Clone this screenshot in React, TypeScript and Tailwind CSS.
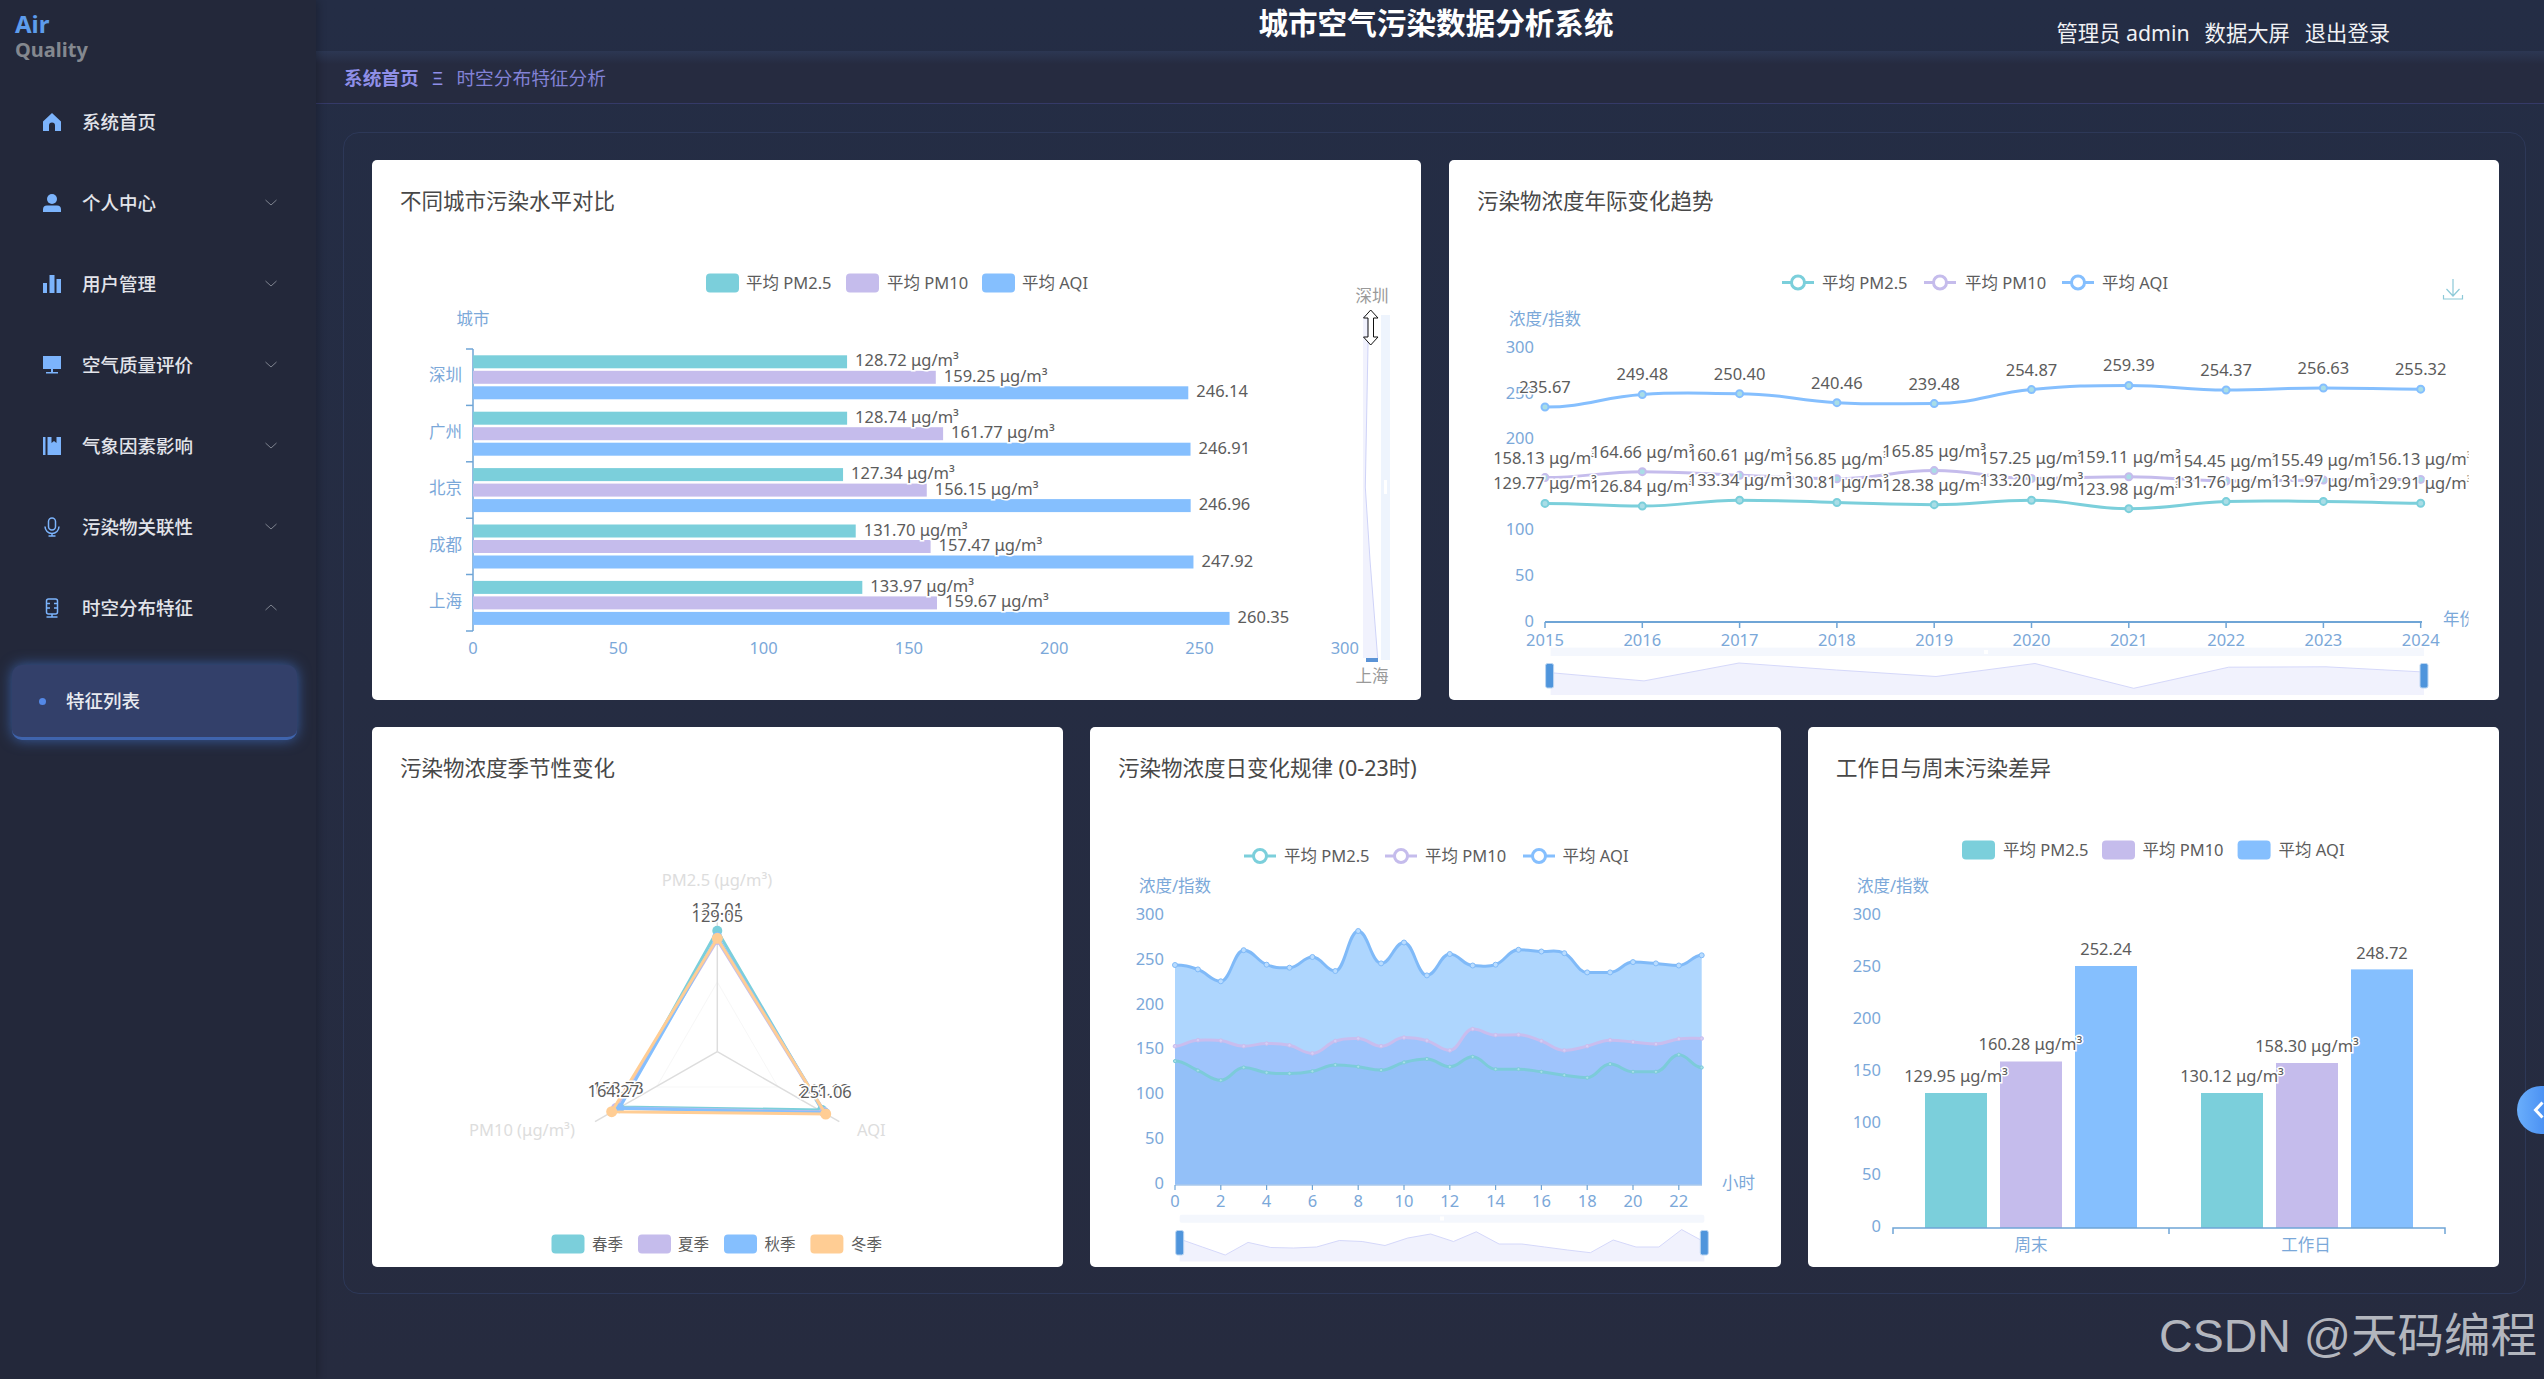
import React from "react";

const TEAL = "#7bcfdb";
const LAVENDER = "#c5bcec";
const BLUE = "#85bffe";
const ORANGE = "#ffcd94";
const TICK = "#7ba8d9";
const AXIS = "#6fa5d6";
const UNIT = " μg/m³";

type Pt = [number, number];

// monotone bezier, close enough to how echarts smooths its lines
const smooth = (pts: Pt[]) => {
  const slope = (i: number) => {
    if (i === 0 || i === pts.length - 1) return 0;
    const a = pts[i][1] - pts[i - 1][1];
    const b = pts[i + 1][1] - pts[i][1];
    if (a * b <= 0) return 0;
    return (pts[i + 1][1] - pts[i - 1][1]) / (pts[i + 1][0] - pts[i - 1][0]);
  };
  let d = `M${pts[0][0]} ${pts[0][1]}`;
  for (let i = 0; i < pts.length - 1; i++) {
    const dx = (pts[i + 1][0] - pts[i][0]) * 0.42;
    d += `C${pts[i][0] + dx} ${pts[i][1] + slope(i) * dx} ${pts[i + 1][0] - dx} ${pts[i + 1][1] - slope(i + 1) * dx} ${pts[i + 1][0]} ${pts[i + 1][1]}`;
  }
  return d;
};

const area = (pts: Pt[], base: number) =>
  `${smooth(pts)}L${pts[pts.length - 1][0]} ${base}L${pts[0][0]} ${base}Z`;

const Txt: React.FC<{
  x: number;
  y: number;
  fill?: string;
  anchor?: "start" | "middle" | "end";
  size?: number;
  outline?: boolean;
  children: React.ReactNode;
}> = ({ x, y, fill = "#5c5c5c", anchor = "start", size = 16.5, outline, children }) => (
  <text
    x={x}
    y={y - 1.5}
    fill={fill}
    fontSize={size}
    textAnchor={anchor}
    dominantBaseline="central"
    stroke={outline ? "#fff" : undefined}
    strokeWidth={outline ? 3 : undefined}
    paintOrder="stroke"
  >
    {children}
  </text>
);

const RectLegend: React.FC<{ y: number; items: [number, number, string, string][]; size?: number }> = ({ y, items, size }) => (
  <>
    {items.map(([x, tx, color, label]) => (
      <g key={label}>
        <rect x={x} y={y - 10.5} width={33} height={19} rx={4} fill={color} />
        <Txt x={tx} y={y} size={size}>{label}</Txt>
      </g>
    ))}
  </>
);

const LineLegend: React.FC<{ y: number; items: [number, number, string, string][] }> = ({ y, items }) => (
  <>
    {items.map(([x, tx, color, label]) => (
      <g key={label}>
        <line x1={x} x2={x + 32} y1={y - 1} y2={y - 1} stroke={color} strokeWidth={3} />
        <circle cx={x + 16} cy={y - 1} r={6.5} fill="#fff" stroke={color} strokeWidth={3} />
        <Txt x={tx} y={y}>{label}</Txt>
      </g>
    ))}
  </>
);

const Handle: React.FC<{ x: number; y: number; h: number }> = ({ x, y, h }) => (
  <rect x={x} y={y} width={8} height={h} rx={2} fill="#4f95dc" stroke="#bcd6f2" strokeWidth={1} />
);

const cities: [string, number[]][] = [
  ["深圳", [128.72, 159.25, 246.14]],
  ["广州", [128.74, 161.77, 246.91]],
  ["北京", [127.34, 156.15, 246.96]],
  ["成都", [131.7, 157.47, 247.92]],
  ["上海", [133.97, 159.67, 260.35]],
];

const CityChart = () => (
  <svg viewBox="372 242 1049 458" className="block w-full h-[458px]">
    <RectLegend
      y={284}
      items={[
        [706, 746, TEAL, "平均 PM2.5"],
        [846, 887, LAVENDER, "平均 PM10"],
        [982, 1022, BLUE, "平均 AQI"],
      ]}
    />
    <Txt x={473} y={319.5} fill={TICK} anchor="middle">城市</Txt>
    <line x1={473} x2={473} y1={349} y2={631} stroke={AXIS} strokeWidth={1.5} />
    {[349, 405.4, 461.8, 518.2, 574.6, 631].map((y) => (
      <line key={y} x1={466} x2={473} y1={y} y2={y} stroke={AXIS} strokeWidth={1.5} />
    ))}
    {[0, 50, 100, 150, 200, 250, 300].map((v) => (
      <Txt key={v} x={473 + v * 2.906} y={649} fill={TICK} anchor="middle">{v}</Txt>
    ))}
    {cities.map(([name, vals], i) => {
      const top = 355.3 + i * 56.4;
      return (
        <g key={name}>
          <Txt x={462} y={top + 21} fill={TICK} anchor="end">{name}</Txt>
          {vals.map((v, j) => (
            <rect key={j} x={473} y={top + j * 15.5} width={v * 2.906} height={13} fill={[TEAL, LAVENDER, BLUE][j]} />
          ))}
          {vals.map((v, j) => (
            <Txt key={j} x={473 + v * 2.906 + 8} y={top + j * 15.5 + 6} outline>
              {v.toFixed(2)}{j < 2 ? UNIT : ""}
            </Txt>
          ))}
        </g>
      );
    })}
    {/* vertical dataZoom */}
    <Txt x={1372} y={297} fill="#999" anchor="middle">深圳</Txt>
    <Txt x={1372} y={677} fill="#999" anchor="middle">上海</Txt>
    <rect x={1381} y={315} width={9} height={345} fill="#eef4fd" />
    <rect x={1384} y={480} width={3} height={14} fill="#fff" />
    <polygon points="1363,315 1368,315 1368,345 1365.3,487 1370,560 1377.7,658 1363,658" fill="#f1f2fd" />
    <polyline points="1368,315 1368,345 1365.3,487 1370,560 1377.7,658" fill="none" stroke="#cfd3f8" strokeWidth={1} />
    <rect x={1366} y={658} width={12} height={4} fill="#5b93d6" />
    <polygon
      points="1370.7,310 1378,318 1373.5,318 1373.5,337 1378,337 1370.7,345 1363.5,337 1368,337 1368,318 1363.5,318"
      fill="#fff"
      stroke="#111"
      strokeWidth={1}
    />
  </svg>
);

const yearX = (i: number) => 1545 + i * 97.3;
const yearY = (v: number) => 621.5 - v * 0.91;
const yearly = [
  { color: TEAL, unit: true, vals: [129.77, 126.84, 133.34, 130.81, 128.38, 133.2, 123.98, 131.76, 131.97, 129.91] },
  { color: LAVENDER, unit: true, vals: [158.13, 164.66, 160.61, 156.85, 165.85, 157.25, 159.11, 154.45, 155.49, 156.13] },
  { color: BLUE, unit: false, vals: [235.67, 249.48, 250.4, 240.46, 239.48, 254.87, 259.39, 254.37, 256.63, 255.32] },
];

const YearChart = () => (
  <svg viewBox="1449 242 1050 458" className="block w-full h-[458px]">
    <defs>
      <clipPath id="yearClip">
        <rect x={1449} y={242} width={1019.5} height={458} />
      </clipPath>
    </defs>
    <LineLegend
      y={283.5}
      items={[
        [1782, 1822, TEAL, "平均 PM2.5"],
        [1924, 1965, LAVENDER, "平均 PM10"],
        [2062, 2102, BLUE, "平均 AQI"],
      ]}
    />
    <path d="M2453 279v17M2446.500 289l6.500 7 6.500-7M2443.500 295v4h19v-4" fill="none" stroke="#8cc9d8" strokeWidth={1.2} />
    <Txt x={1545} y={319.5} fill={TICK} anchor="middle">浓度/指数</Txt>
    {[0, 50, 100, 200, 250, 300].map((v) => (
      <Txt key={v} x={1534} y={621.5 - (v / 50) * 45.6} fill={TICK} anchor="end">{v}</Txt>
    ))}
    <line x1={1545} x2={2422} y1={622} y2={622} stroke={AXIS} strokeWidth={2} />
    {yearly[0].vals.map((_, i) => (
      <g key={i}>
        <line x1={yearX(i)} x2={yearX(i)} y1={622} y2={628} stroke={AXIS} strokeWidth={1.5} />
        <Txt x={yearX(i)} y={640.5} fill={TICK} anchor="middle">{2015 + i}</Txt>
      </g>
    ))}
    <g clipPath="url(#yearClip)">
      <Txt x={2443} y={620} fill={TICK}>年份</Txt>
      {yearly.map((s) => (
        <g key={s.color}>
          <path d={smooth(s.vals.map((v, i): Pt => [yearX(i), yearY(v)]))} fill="none" stroke={s.color} strokeWidth={3} />
          {s.vals.map((v, i) => (
            <circle key={i} cx={yearX(i)} cy={yearY(v)} r={3.5} fill="#a9dde6" stroke={s.color} strokeWidth={2} />
          ))}
        </g>
      ))}
      {yearly.map((s) =>
        s.vals.map((v, i) => (
          <Txt key={s.color + i} x={yearX(i)} y={yearY(v) - 19} anchor="middle" outline>
            {v.toFixed(2)}{s.unit ? UNIT : ""}
          </Txt>
        ))
      )}
    </g>
    {/* dataZoom */}
    <rect x={1550.6} y={647.6} width={873.4} height={8.4} fill="#f4f7fd" />
    <rect x={1984} y={650} width={4} height={4} fill="#fff" />
    <polygon
      points="1550.6,695 1550.6,672.7 1644,680.9 1739,663 1836.5,670 1936,676.5 2035,663.5 2133.7,688.3 2228.7,667.2 2326,666.8 2424,672 2424,695"
      fill="#f1f2fd"
    />
    <polyline
      points="1550.6,672.7 1644,680.9 1739,663 1836.5,670 1936,676.5 2035,663.5 2133.7,688.3 2228.7,667.2 2326,666.8 2424,672"
      fill="none"
      stroke="#d5d8fa"
      strokeWidth={1}
    />
    <Handle x={1545.6} y={663.5} h={24.5} />
    <Handle x={2420} y={663.5} h={24.5} />
  </svg>
);

const seasons: { color: string; pts: Pt[] }[] = [
  { color: TEAL, pts: [[717.3, 930.7], [619, 1107], [822, 1110]] },
  { color: LAVENDER, pts: [[717.3, 940], [616, 1108], [824, 1112]] },
  { color: BLUE, pts: [[717.3, 937], [619.3, 1108.3], [825, 1112.7]] },
  { color: ORANGE, pts: [[717.3, 938.3], [611.7, 1111.7], [825.7, 1114]] },
];

const SeasonChart = () => (
  <svg viewBox="372 809 691 458" className="block w-full h-[458px]">
    <Txt x={717} y={880.5} fill="#ddd" anchor="middle">PM2.5 (μg/m³)</Txt>
    <Txt x={469} y={1131} fill="#ddd">PM10 (μg/m³)</Txt>
    <Txt x={857} y={1131} fill="#ddd">AQI</Txt>
    <polygon points="717.3,982 656.5,1087 778,1087" fill="none" stroke="#f7f7f7" />
    <line x1={717.3} x2={717.3} y1={1051.7} y2={912} stroke="#ddd" strokeWidth={1.5} />
    <line x1={717.3} x2={595} y1={1051.7} y2={1121.7} stroke="#ddd" strokeWidth={1.5} />
    <line x1={717.3} x2={839.3} y1={1051.7} y2={1121.7} stroke="#ddd" strokeWidth={1.5} />
    {seasons.map((s) => (
      <g key={s.color}>
        <polygon points={s.pts.map((p) => p.join(",")).join(" ")} fill="none" stroke={s.color} strokeWidth={3} />
        {s.pts.map((p, i) => (
          <circle key={i} cx={p[0]} cy={p[1]} r={s.color === ORANGE ? 5.5 : 5} fill={s.color} />
        ))}
      </g>
    ))}
    <Txt x={717.3} y={909.5} anchor="middle" outline>137.01</Txt>
    <Txt x={717.3} y={917} anchor="middle" outline>129.05</Txt>
    <Txt x={618} y={1089} anchor="middle" outline>158.73</Txt>
    <Txt x={613.3} y={1091.7} anchor="middle" outline>164.27</Txt>
    <Txt x={824} y={1091} anchor="middle" outline>248.12</Txt>
    <Txt x={826} y={1093.3} anchor="middle" outline>251.06</Txt>
    <RectLegend
      size={15.5}
      y={1245}
      items={[
        [551.5, 592, TEAL, "春季"],
        [638, 678, LAVENDER, "夏季"],
        [724, 764.5, BLUE, "秋季"],
        [810.4, 851, ORANGE, "冬季"],
      ]}
    />
  </svg>
);

const hourX = (i: number) => 1175 + i * 22.9;
const aqiY = [965, 969.4, 981.3, 950.2, 964.7, 967.7, 957, 971, 931, 963.4, 942.5, 975.4, 954, 965.5, 964.7, 949.8, 951.5, 953.2, 972.4, 972.4, 962.1, 963.4, 965.5, 955.3];
const pm10Y = [1046.2, 1040.2, 1040.6, 1046.2, 1043.6, 1045.3, 1053.4, 1041, 1038.5, 1046.2, 1037.6, 1040.6, 1050.4, 1029.1, 1035.1, 1034.7, 1041, 1050.4, 1046.2, 1040.2, 1041.9, 1044, 1038.9, 1038.5];
const pm25Y = [1061.1, 1070.5, 1080.3, 1067.5, 1072.6, 1073.5, 1071.3, 1064.9, 1066.7, 1070.1, 1062.4, 1059, 1066.7, 1056.8, 1069.2, 1069.2, 1071.8, 1075.2, 1077.7, 1064.1, 1071.8, 1071.8, 1054.7, 1067.5];
const zoomY = [1239, 1247, 1255, 1242.4, 1247.5, 1248, 1247, 1240.5, 1241.5, 1245.5, 1238, 1234, 1241.5, 1231.8, 1244, 1244, 1247, 1250, 1252.7, 1240, 1247, 1247, 1229.6, 1242];

const hourlySeries = [
  { ys: aqiY, fill: "#aed6fe", line: "#80baf8", dot: "#b9dcff", r: 2.5 },
  { ys: pm10Y, fill: "#9fc4fc", line: "#c9bdee", dot: "#d6cef4", r: 1.8 },
  { ys: pm25Y, fill: "#93c0f8", line: "#7ccbd9", dot: "#a9e0e8", r: 1.6 },
];

const HourChart = () => {
  const zoomPts = zoomY.map((y, i) => `${1179.6 + i * 22.82},${y}`).join(" ");
  return (
    <svg viewBox="1090 809 691 458" className="block w-full h-[458px]">
      <LineLegend
        y={857}
        items={[
          [1244, 1284, TEAL, "平均 PM2.5"],
          [1385, 1425, LAVENDER, "平均 PM10"],
          [1523, 1562.5, BLUE, "平均 AQI"],
        ]}
      />
      <Txt x={1175} y={887} fill={TICK} anchor="middle">浓度/指数</Txt>
      {[0, 50, 100, 150, 200, 250, 300].map((v) => (
        <Txt key={v} x={1164} y={1183.5 - (v / 50) * 44.7} fill={TICK} anchor="end">{v}</Txt>
      ))}
      {hourlySeries.map((s) => (
        <path key={s.fill} d={area(s.ys.map((y, i): Pt => [hourX(i), y]), 1185)} fill={s.fill} />
      ))}
      {hourlySeries.map((s) => (
        <g key={s.line}>
          <path d={smooth(s.ys.map((y, i): Pt => [hourX(i), y]))} fill="none" stroke={s.line} strokeWidth={3} />
          {s.ys.map((y, i) => (
            <circle key={i} cx={hourX(i)} cy={y} r={s.r} fill={s.dot} stroke={s.line} strokeWidth={1} />
          ))}
        </g>
      ))}
      <line x1={1175} x2={1702} y1={1185} y2={1185} stroke="#a9c9ec" strokeWidth={1.5} />
      {Array.from({ length: 12 }, (_, i) => i * 2).map((h) => (
        <g key={h}>
          <line x1={hourX(h)} x2={hourX(h)} y1={1185} y2={1190} stroke={AXIS} strokeWidth={1.2} />
          <Txt x={hourX(h)} y={1202} fill={TICK} anchor="middle">{h}</Txt>
        </g>
      ))}
      <Txt x={1722} y={1183.5} fill={TICK}>小时</Txt>
      <rect x={1179.6} y={1214.7} width={524.8} height={8.1} rx={2} fill="#f4f7fd" />
      <rect x={1440} y={1216.5} width={4} height={4} fill="#fff" />
      <polygon points={`1179.6,1261.6 ${zoomPts} 1704.4,1261.6`} fill="#f1f2fd" />
      <polyline points={zoomPts} fill="none" stroke="#d5d8fa" strokeWidth={1} />
      <Handle x={1175.7} y={1230.5} h={24.5} />
      <Handle x={1700.3} y={1230.5} h={24.5} />
    </svg>
  );
};

const weekBars: [number, number, string, string, number, number][] = [
  [1925, 1093, TEAL, "129.95" + UNIT, 1956, 1077],
  [2000, 1061.5, LAVENDER, "160.28" + UNIT, 2030.4, 1045],
  [2075, 966, BLUE, "252.24", 2106, 950],
  [2201, 1093, TEAL, "130.12" + UNIT, 2232, 1077],
  [2276, 1063, LAVENDER, "158.30" + UNIT, 2307, 1047],
  [2351, 969.4, BLUE, "248.72", 2382, 953.6],
];

const WeekChart = () => (
  <svg viewBox="1808 809 691 458" className="block w-full h-[458px]">
    <RectLegend
      y={851}
      items={[
        [1962, 2003, TEAL, "平均 PM2.5"],
        [2102, 2142.4, LAVENDER, "平均 PM10"],
        [2237.6, 2278.5, BLUE, "平均 AQI"],
      ]}
    />
    <Txt x={1893} y={887} fill={TICK} anchor="middle">浓度/指数</Txt>
    {[0, 50, 100, 150, 200, 250, 300].map((v) => (
      <Txt key={v} x={1881} y={1227 - (v / 50) * 52} fill={TICK} anchor="end">{v}</Txt>
    ))}
    {weekBars.map(([x, top, color]) => (
      <rect key={x} x={x} y={top} width={62} height={1228 - top} fill={color} />
    ))}
    <path d="M1893 1234v-6H2445v6M2169 1228v6" fill="none" stroke={AXIS} strokeWidth={1.5} />
    {weekBars.map(([, , , label, cx, cy]) => (
      <Txt key={label} x={cx} y={cy} anchor="middle" outline>{label}</Txt>
    ))}
    <Txt x={2031} y={1246} fill={TICK} anchor="middle">周末</Txt>
    <Txt x={2306} y={1246} fill={TICK} anchor="middle">工作日</Txt>
  </svg>
);

const Card: React.FC<{ title: string; children: React.ReactNode }> = ({ title, children }) => (
  <div className="bg-white rounded-[5px] h-[540px] flex flex-col overflow-hidden">
    <div className="h-[82px] shrink-0 pl-[28px] flex items-center text-[21.5px] text-[#484848]">{title}</div>
    {children}
  </div>
);

const icons: Record<string, React.ReactNode> = {
  home: <path d="M10 1 19 9.500V19h-6v-5.500a3 3 0 0 0-6 0V19H1V9.500Z" fill="currentColor" />,
  user: (
    <>
      <circle cx="10" cy="6" r="5" fill="currentColor" />
      <path d="M1 19v-2.500a4 4 0 0 1 4-4h10a4 4 0 0 1 4 4V19Z" fill="currentColor" />
    </>
  ),
  bars: <path d="M1 9h4v10H1ZM7.500 1h5v18h-5ZM14.500 5h4.500v14h-4.500Z" fill="currentColor" />,
  monitor: <path d="M1 1h18v13H1ZM9 14h2v3h5v1.500H4V17h5Z" fill="currentColor" />,
  book: <path d="M1 1h2.500v18H1ZM5.500 1h4v6l2.500-2 2.500 2V1H19v18H5.500Z" fill="currentColor" />,
  mic: (
    <g fill="none" stroke="currentColor" strokeWidth="1.500">
      <rect x="6.500" y="1" width="7" height="12" rx="3.500" />
      <path d="M3 9.500a7 7 0 0 0 14 0M10 16.500V19M6.500 19h7" />
    </g>
  ),
  server: (
    <g fill="none" stroke="currentColor" strokeWidth="1.500">
      <rect x="4.500" y="1" width="11" height="15" rx="2" />
      <path d="M4.500 5.500H8M12 5.500h3.500M4.500 10H8M12 10h3.500M10 16v3M4.500 19h11" />
    </g>
  ),
};

const menu: [string, string, "none" | "down" | "up"][] = [
  ["home", "系统首页", "none"],
  ["user", "个人中心", "down"],
  ["bars", "用户管理", "down"],
  ["monitor", "空气质量评价", "down"],
  ["book", "气象因素影响", "down"],
  ["mic", "污染物关联性", "down"],
  ["server", "时空分布特征", "up"],
];

const Sidebar = () => (
  <aside className="w-[316px] shrink-0 bg-[#23283a] shadow-[2px_0_8px_rgba(0,0,0,0.25)] z-10">
    <div className="h-[81px] pl-[15px] pt-[11px] font-bold">
      <div className="text-[24px] leading-[26px] text-[#5d9cec]">Air</div>
      <div className="text-[20px] leading-[26px] text-[#84888f]">Quality</div>
    </div>
    {menu.map(([icon, label, arrow]) => (
      <div key={label} className="h-[81px] pl-[42px] pr-[39px] flex items-center text-[#e2e4ea]">
        <svg viewBox="0 0 20 20" className="w-[20px] h-[20px] text-[#7cb4fc]">{icons[icon]}</svg>
        <span className="ml-[20px] flex-1 text-[18.5px] font-medium">{label}</span>
        {arrow !== "none" && (
          <svg viewBox="0 0 12 7" className="w-[12px] h-[7px] text-[#7f8490]">
            <path d={arrow === "down" ? "M0.500 1 6 6l5.500-5" : "M0.500 6 6 1l5.500 5"} fill="none" stroke="currentColor" strokeWidth="1" />
          </svg>
        )}
      </div>
    ))}
    <div className="mt-[17px] ml-[12px] w-[285px] h-[75px] rounded-[10px] bg-[#33406a] border-b-[3px] border-[#3f64ad] shadow-[0_0_14px_#3a5fa3] pl-[27px] flex items-center text-[#e8eaf0]">
      <span className="w-[7px] h-[7px] rounded-full bg-[#5488e6]" />
      <span className="ml-[20px] text-[18.5px] font-medium">特征列表</span>
    </div>
  </aside>
);

export default function App() {
  return (
    <div className="relative flex w-[2544px] h-[1379px] overflow-hidden bg-[#262b40] font-['Noto_Sans','Noto_Sans_CJK_SC',sans-serif]">
      <Sidebar />
      <main className="flex-1 flex flex-col bg-linear-to-b from-[#242d45] to-[#262b3f]">
        <header className="h-[51px] shrink-0 pl-[12px] grid grid-cols-[1fr_auto_1fr] text-white">
          <div />
          <h1 className="mt-[4px] text-[29.600px] leading-[38px] font-bold">城市空气污染数据分析系统</h1>
          <div className="mt-[18px] pr-[154px] flex justify-end gap-[15px] text-[21.300px] leading-[30px] text-[#f0f1f4]">
            <span>管理员 admin</span>
            <span>数据大屏</span>
            <span>退出登录</span>
          </div>
        </header>
        <div className="h-[53px] shrink-0 pl-[28px] pt-[2px] flex items-center gap-[13px] text-[18.700px] border-b border-[#353a68] bg-linear-to-b from-[#2c3753] to-[#262b40] to-[25%]">
          <span className="font-bold text-[#8f8fe8]">系统首页</span>
          <span className="text-[#8f8fe8]">Ξ</span>
          <span className="text-[#8282d6]">时空分布特征分析</span>
        </div>
        <div className="mt-[28px] ml-[27px] mr-[18px] h-[1162px] border border-[#2d3858] rounded-[16px] pl-[28px] pr-[26px] pt-[27px] pb-[26px] flex flex-col gap-[27px]">
          <div className="grid grid-cols-[1049px_1fr] gap-[28px]">
            <Card title="不同城市污染水平对比"><CityChart /></Card>
            <Card title="污染物浓度年际变化趋势"><YearChart /></Card>
          </div>
          <div className="grid grid-cols-3 gap-[27px]">
            <Card title="污染物浓度季节性变化"><SeasonChart /></Card>
            <Card title="污染物浓度日变化规律 (0-23时)"><HourChart /></Card>
            <Card title="工作日与周末污染差异"><WeekChart /></Card>
          </div>
        </div>
      </main>
      {/* collapse tab on the right edge */}
      <div className="absolute right-0 top-[1086px] w-[27px] h-[48px] rounded-l-[24px] bg-linear-to-r from-[#6aaefb] to-[#4c92f3] flex items-center justify-end">
        <svg viewBox="0 0 11 18" className="w-[11px] h-[18px]">
          <path d="M9.500 1.500 2.500 9l7 7.500" fill="none" stroke="#fff" strokeWidth="3" />
        </svg>
      </div>
      {/* CSDN watermark baked into the screenshot */}
      <div className="absolute right-[7px] top-[1305px] text-[46.500px] leading-[62px] text-[#b3b6be] font-['Liberation_Sans','Noto_Sans_CJK_SC',sans-serif]">
        CSDN @天码编程
      </div>
    </div>
  );
}
